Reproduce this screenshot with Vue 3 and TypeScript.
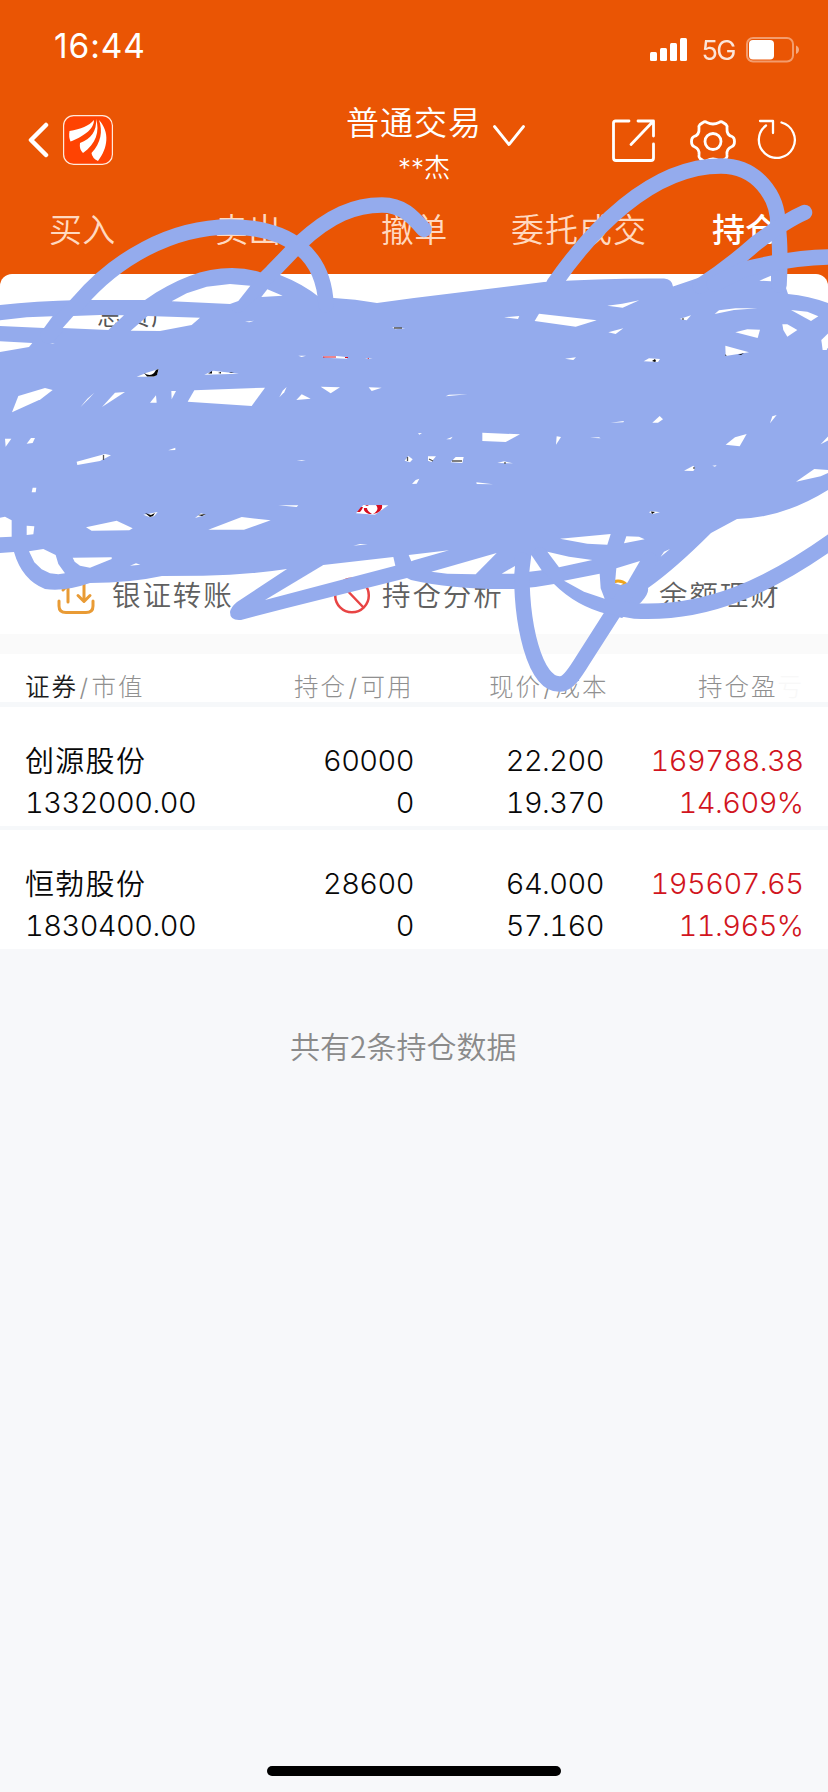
<script setup lang="ts">
interface Holding {
  name: string
  value: string
  amount: string
  available: string
  price: string
  cost: string
  profit: string
  rate: string
}

const tabs = ['买入', '卖出', '撤单', '委托成交', '持仓']

const holdings: Holding[] = [
  { name: '创源股份', value: '1332000.00', amount: '60000', available: '0', price: '22.200', cost: '19.370', profit: '169788.38', rate: '14.609%' },
  { name: '恒勃股份', value: '1830400.00', amount: '28600', available: '0', price: '64.000', cost: '57.160', profit: '195607.65', rate: '11.965%' },
]

interface GapGroup {
  x: number
  y: number
  shapes: string[]
}

// Gaps left uncovered between the marker strokes, in thirds of a pixel
const gaps: GapGroup[] = [
  {
    x: 0, y: 200,
    shapes: [
      '0,361 80,352 158,349 132,384 0,378', '0,424 97,429 87,441 0,456',
      '515,304 560,280 620,260 690,252 751,257 715,303 690,312', '784,291 802,268 848,287',
      '188,384 220,348 300,345 372,346 325,390', '392,392 443,348 600,353 575,375 480,393',
      '735,365 762,362 748,367', '1176,382 1216,385 1186,388', '895,467 918,467 905,471',
      '967,468 1010,468 1045,472 1040,476 975,473', '1095,476 1105,474 1118,476',
      '410,530 440,518 476,507 473,520 463,530', '613,524 640,512 717,521',
      '36,637 55,588 135,564 158,570 122,598', '241,622 262,596 283,578 265,598',
      '306,621 345,578 375,576', '450,608 468,586 470,608', '514,573 528,573 515,598',
      '563,605 583,571 795,563 755,618', '838,592 848,572 860,561 853,577', '962,560 1020,562 992,580',
      '1106,562 1145,563 1115,573', '889,600 905,583 932,596', '150,430 158,430 164,432',
    ],
  },
  {
    x: 414, y: 140,
    shapes: [
      '580,497 625,491 676,481 626,503', '270,532 316,528 312,537', '375,521 548,541 485,560 362,543',
      '583,577 628,565 605,582', '797,537 831,526 818,541', '902,522 915,511 965,505 1030,505 960,510',
      '964,577 1000,568 1038,569 1031,594', '1105,553 1120,553 1150,570 1120,590 1108,570',
      '1131,510 1180,515 1213,529 1191,543', '1245,578 1222,600 1226,630 1238,630 1245,615',
      '934,617 1005,637 935,648', '453,656 486,652 478,660', '689,664 705,655 738,657 732,666',
      '95,769 105,764 160,763', '1036,422 1071,407 1071,424',
    ],
  },
  {
    x: 0, y: 400,
    shapes: [
      '15,116 34,116 17,140', '80,131 93,114 105,114 98,129', '230,185 315,162 333,166 300,183 232,195',
      '505,151 526,143 526,150', '95,277 98,263 109,263 107,277', '80,377 103,379 100,403 80,405',
      '0,353 15,350 35,361 35,410 0,412', '87,454 130,447 167,465 175,492 195,520 175,523 150,520 125,508 103,487',
      '218,473 335,472 335,477 270,503 240,497 224,485', '258,382 350,362 398,385 388,391 275,392',
      '625,389 725,351 812,361 732,389', '835,316 895,316 890,321', '430,344 473,336 463,348 450,352',
      '585,354 603,340 618,344', '1068,340 1090,315 1165,316 1125,344', '1214,182 1225,168 1238,178 1230,187',
      '890,181 917,181 905,183', '390,497 408,490 421,494', '1060,437 1103,433 1080,432',
      '795,600 970,495 1180,471 1186,497 1000,546', '1226,465 1347,451 1242,481 1234,484',
    ],
  },
  {
    x: 414, y: 400,
    shapes: [
      '52,515 248,459 185,523 100,521', '263,521 303,498 301,521', '352,465 383,511 346,515',
      '400,455 465,470 535,480 435,502', '450,542 557,521 560,565 572,596 510,575', '438,416 590,402 580,434 520,431',
      '637,409 675,410 692,418 630,430', '607,505 678,483 640,548 622,556 603,550', '740,470 750,455 768,447',
      '205,98 318,103 275,126 205,123', '428,109 441,111 426,134', '590,68 630,63 628,67',
      '715,68 737,48 747,58 732,68', '528,113 555,112 560,115', '935,134 963,112 998,102 977,139',
      '1068,70 1075,49 1088,45', '1220,133 1245,106 1245,120', '1146,245 1201,207 1245,210 1245,218 1220,229',
      '810,212 838,197 843,205 838,213', '705,337 712,333 738,337 716,342', '250,189 270,184 297,190',
      '110,187 125,171 149,171 145,189', '42,169 66,169 52,186 42,182', '187,247 237,253 188,252',
      '-6,252 5,240 16,236 8,251', '97,118 116,110 110,118', '895,197 908,196 903,200', '12,100 24,99 16,104',
    ],
  },
]
</script>

<template>
  <div class="screen">
    <header class="top">
      <div class="status">
        <span class="clock">16:44</span>
        <div class="signals">
          <svg class="bars" width="38" height="24" viewBox="0 0 38 24">
            <rect x="0" y="14" width="7" height="9" rx="1.5" /><rect x="10" y="10" width="7" height="13" rx="1.5" />
            <rect x="20" y="5" width="7" height="18" rx="1.5" /><rect x="30" y="0" width="7" height="23" rx="1.5" />
          </svg>
          <span class="network">5G</span>
          <svg width="54" height="26" viewBox="0 0 54 26">
            <rect x="1" y="1" width="46" height="23.5" rx="6" fill="none" stroke="#fff" stroke-opacity=".42" stroke-width="2" />
            <rect x="3" y="3" width="25" height="19.5" rx="4" fill="#fff" />
            <path d="M50 8.5c4 1.5 4 7 0 8.500z" fill="#fff" fill-opacity=".5" />
          </svg>
        </div>
      </div>

      <div class="navbar">
        <div class="brand">
          <svg width="22" height="38" viewBox="0 0 22 38"><path d="M19 4L4 19L19 34" class="back" /></svg>
          <svg width="50" height="50" viewBox="0 0 50 50">
            <rect x=".6" y=".6" width="48.800" height="48.800" rx="10" fill="#ff4302" stroke="#ffeadb" stroke-width="1.200" />
            <path d="M6.500 16C18 14 26 11 31 5C31 15 19 22 7.500 26.500Q5.500 22 6.500 16Z" />
            <path d="M33 4C37 16 33 29 20 38Q16 34 17 28C28 24 34 16 33 4Z" />
            <path d="M36 5C47 17 45 33 35 46Q29 43 28.500 38C38 28 40 16 36 5Z" />
          </svg>
        </div>
        <div class="account">
          <div class="account-line">
            <span class="account-type">普通交易</span>
            <svg width="32" height="22" viewBox="0 0 32 22"><path d="M1.500 1.500L16 19.500L30.500 1.500" class="line" /></svg>
          </div>
          <span class="owner">**杰</span>
        </div>
        <div class="tools">
          <svg width="43" height="43" viewBox="0 0 43 43">
            <path d="M17 2H3.500Q1.500 2 1.500 4V39Q1.500 41.500 4 41.500H39Q41.500 41.500 41.500 39V25M26 2H41.500V17M40.500 3L19 25.500" class="line" />
          </svg>
          <svg class="gear" width="46" height="46" viewBox="0 0 46 46">
            <path d="M17 3.500Q23 6.500 29 3.500Q31 2 33 3.500L36 5.500Q37.500 7 37 9Q36.500 16 42 17.500Q44.500 18.500 44.500 22.500T42 27.500Q36 30 37 36Q37.500 38 36 39.500L33 41.500Q31 43 29 41.500Q23 38.500 17 41.500Q15 43 13 41.500L10 39.500Q8.500 38 9 36Q10 30 4 27.500Q1.500 26.500 1.500 22.500T4 17.500Q9.500 16 9 9Q8.500 7 10 5.500L13 3.500Q15 2 17 3.500Z" class="line" />
            <circle cx="23" cy="22.500" r="8" class="line" />
          </svg>
          <svg class="reload" width="40" height="40" viewBox="0 0 40 40">
            <path d="M24.500 3.500A18 18 0 1 1 9 6.500M3 2H16V14" class="line thin" />
          </svg>
        </div>
      </div>

      <nav class="tabs">
        <span v-for="tab in tabs" :key="tab" :class="{ active: tab === '持仓' }">{{ tab }}</span>
      </nav>
    </header>

    <section class="summary">
      <span class="total">总资产</span>
      <div class="actions">
        <div class="action">
          <svg width="38" height="38" viewBox="0 0 38 38" class="transfer">
            <path d="M2 24V29Q2 35.500 9 35.500H29Q36 35.500 36 29V24M11 25V8L6 13M27 6V24M21 18.500L27 24.500L33 18.500" />
          </svg>
          <span>银证转账</span>
        </div>
        <div class="action">
          <svg width="38" height="38" viewBox="0 0 38 38" class="analysis">
            <circle cx="18" cy="18.500" r="16.800" /><path d="M7 7L29 30" />
          </svg>
          <span>持仓分析</span>
        </div>
        <div class="action">
          <svg width="38" height="38" viewBox="0 0 38 38" class="finance">
            <circle cx="14" cy="16" r="12" /><circle cx="23" cy="20" r="12" />
          </svg>
          <span>余额理财</span>
        </div>
      </div>
    </section>

    <section class="positions">
      <div class="head">
        <span><b>证券</b><em>/</em>市值</span><span>持仓<em>/</em>可用</span><span>现价<em>/</em>成本</span>
        <span>持仓盈<i>亏</i></span>
      </div>
      <div v-for="item in holdings" :key="item.name" class="row">
        <div><span class="name">{{ item.name }}</span><span>{{ item.value }}</span></div>
        <div><span>{{ item.amount }}</span><span>{{ item.available }}</span></div>
        <div><span>{{ item.price }}</span><span>{{ item.cost }}</span></div>
        <div class="gain"><span>{{ item.profit }}</span><span>{{ item.rate }}</span></div>
      </div>
    </section>

    <p class="count">共有<span>2</span>条持仓数据</p>
    <div class="home-bar"></div>

    <svg class="marker" width="828" height="720" viewBox="0 0 828 720">
      <defs>
        <mask id="gaps" maskUnits="userSpaceOnUse" x="-10" y="0" width="850" height="720">
          <rect x="-10" width="850" height="720" fill="#fff" />
          <g v-for="group in gaps" :key="group.x + '-' + group.y" :transform="`translate(${group.x} ${group.y}) scale(.33333)`">
            <polygon v-for="shape in group.shapes" :key="shape" :points="shape" fill="#000" />
          </g>
        </mask>
      </defs>
      <g mask="url(#gaps)">
        <path
          class="ink"
          d="M0 305Q35 301 80 300L145 300C175 279 203 268 232 268Q248 268 262 273L280 275Q303 284 319 297L334 298Q355 299 377 303L414 298L544 282Q605 278 664 278.500Q672 279 673 286.500L701 277L744 266L785 265L786 288L788 294Q809 296 828 303V490Q783 518 737 519L711 533Q675 569 648 588Q650 598 622 618L607 614Q576 606 554 584Q534 588 514 589Q455 590 411 580L407 578L287 608L241 620Q230 621 230 612Q231 607 237 602L287 569Q247 575 203 575.700L162 576Q130 583 90 583Q64 592 45 589Q22 580 14 552L0 553Z"
        />
        <path class="stroke" d="M48 336L79 302C115 260 170 227 230 227C290 227 324 255 326 305" />
        <path class="stroke" d="M238 305L272 272L300 243C330 215 355 205 382 205C402 205 412 216 424 229.500" />
        <path class="stroke" d="M554 284C590 232 650 166 721 166C757 166 778 196 778 225Q781 250 779 285" />
        <path class="stroke" d="M804.500 212.500Q785 221 755 244Q728 268 700 286" />
        <path class="stroke" d="M835 257Q800 256 745 269L714 284" />
        <path class="stroke" d="M522 560C520 625 535 685 560 684C568 684 575 673 583 660L622 599L650 560" />
        <path class="stroke" d="M540 555C562 586 592 606 635 611C708 615 770 585 832 541" />
      </g>
      <g class="fragments">
        <path d="M144 373Q150 377 154 373L156 370L158.500 369L157 375L154 376.500H147ZM209 373L212 371V373.500H208ZM218 373L221 372V373.500ZM229 372L234 373H231ZM652 361L655 359L656 361L655 362ZM725 354.500L727 355.500H725ZM738 355L744 353L741 355ZM145 513L151 515L155 513L153 516L150 517ZM198 515L206 514L202 516ZM651 511.500L655 512L652 514Z" />
        <path class="red" d="M323 356.500H336V357.500H323ZM345 357H348V358H345ZM367 358H369V359ZM357 512L361 507H363Q362 510 360 512ZM376 505H382Q383 510 377 513L373 514Q380 510 376 505ZM365 505H369L367 506ZM364 508Q363 512 369 514L372 514Q367 511 367 508Z" />
        <path class="gray" d="M103.500 455V460M407.500 457V461M429 459L433 461M452 461H462M505 462V464M394 328H402M683 318V320M694 467V469" />
      </g>
    </svg>
  </div>
</template>

<style>
body { margin: 0; }
</style>

<style scoped>
.screen { position: relative; width: 828px; height: 1792px; overflow: hidden; box-sizing: border-box; background: #f7f8fa; color: #080808; font-family: Inter, "Noto Sans CJK SC", sans-serif; font-weight: 350; }
.top { height: 286px; background: #ea5504; color: #fff; }
.status { height: 94px; display: flex; justify-content: space-between; padding: 0 28px 0 54px; }
.clock { font-size: 33.500px; line-height: 92px; font-weight: 400; letter-spacing: .9px; }
.signals { display: flex; align-items: center; padding-top: 5px; height: 89px; }
.bars { fill: #fff; }
.network { margin: 2px 11px 0 13px; font-size: 27px; font-weight: 400; line-height: 30px; letter-spacing: -1.500px; opacity: .85; }
.navbar { height: 98px; display: grid; grid-template-columns: 346px 240px 1fr; }
.brand { display: flex; align-items: center; gap: 14px; padding: 3px 0 0 27px; height: 86px; fill: #fff; }
.back { fill: none; stroke: #fff; stroke-width: 4.500; stroke-linecap: round; stroke-linejoin: round; }
.line { fill: none; stroke: #fff; stroke-width: 2.800; stroke-linecap: round; stroke-linejoin: round; }
.thin { stroke-width: 2.300; }
.account-line { display: flex; align-items: center; height: 58px; }
.account-line svg { margin: 26px 0 0 13px; }
.account-type { width: 134px; font-size: 33px; letter-spacing: 1px; line-height: 59px; white-space: nowrap; }
.owner { display: block; margin: -1px 0 0 52px; font-size: 26px; line-height: 34px; }
.tools { display: flex; padding: 25px 0 0 26px; }
.gear { margin: 0 0 0 35px; }
.reload { margin: 0 0 0 21px; }
.tabs { display: flex; height: 76px; line-height: 76px; font-size: 33px; padding-left: 49px; color: #ffd9c0; white-space: nowrap; }
.tabs span { width: 166px; letter-spacing: .3px; }
.tabs span:nth-child(3) { width: 130px; }
.tabs span:nth-child(4) { width: 201px; letter-spacing: 1px; }
.tabs .active { font-weight: 500; color: #fff; width: 80px; }
.summary { position: relative; box-sizing: border-box; height: 360px; margin-top: -12px; background: #fff; border-radius: 12px 12px 0 0; display: flex; flex-direction: column; justify-content: space-between; padding: 23px 0 16px; }
.total { margin-left: 97px; font-size: 26px; line-height: 38px; color: #555; letter-spacing: 1px; }
.actions { display: grid; grid-template-columns: 277px 270px 1fr; padding-left: 57px; color: #606060; }
.action { display: flex; align-items: center; font-size: 28.500px; line-height: 44px; letter-spacing: 1.900px; }
.action span { margin-left: 17px; }
.action:nth-child(2) span { margin-left: 10px; }
.action svg { fill: none; stroke-width: 3; stroke-linecap: round; stroke-linejoin: round; }
.transfer { stroke: #e99b35; }
.action .analysis { stroke: #e84444; stroke-width: 2.500; }
.finance { stroke: #efa51d; }
.positions { border-top: 20px solid #fafafa; background: #fff; }
.head { height: 48px; display: grid; grid-template-columns: 269px 195px 209px 1fr; padding-left: 25px; line-height: 67px; font-size: 24.500px; letter-spacing: 2px; font-weight: 300; color: #909090; white-space: nowrap; }
.head b { font-weight: 350; color: #1c1c1c; }
.head em { font-style: normal; margin: 0 1.500px; }
.head i { font-style: normal; color: #f8f8f8; }
.row { height: 119px; border-top: 4px solid #f6f8fa; box-sizing: content-box; display: grid; grid-template-columns: 200px 189px 190px 199.500px; padding-left: 25px; font-size: 29px; font-feature-settings: "tnum"; letter-spacing: -.55px; }
.head + .row { border-top-width: 5px; }
.row div { display: flex; flex-direction: column; padding-top: 33px; text-align: right; }
.row div:first-child { text-align: left; }
.row span { height: 42px; line-height: 42px; white-space: nowrap; }
.row .name { letter-spacing: 1.300px; line-height: 43px; }
.gain { color: #d11420; }
.count { margin: 74px 0 0 290px; font-size: 30px; line-height: 45px; color: #8a8a8a; }
.count span { font-family: "Noto Sans CJK SC", sans-serif; }
.home-bar { position: absolute; left: 267px; bottom: 16px; width: 294px; height: 10px; border-radius: 5px; background: #000; }
.marker { position: absolute; left: 0; top: 0; }
.ink { fill: #94abed; }
.stroke { fill: none; stroke: #94abed; stroke-width: 15.500; stroke-linecap: round; stroke-linejoin: round; }
.fragments { fill: #050505; }
.fragments .red { fill: #d60d20; }
.fragments .gray { fill: none; stroke: #555; stroke-width: 1.300; }
</style>
